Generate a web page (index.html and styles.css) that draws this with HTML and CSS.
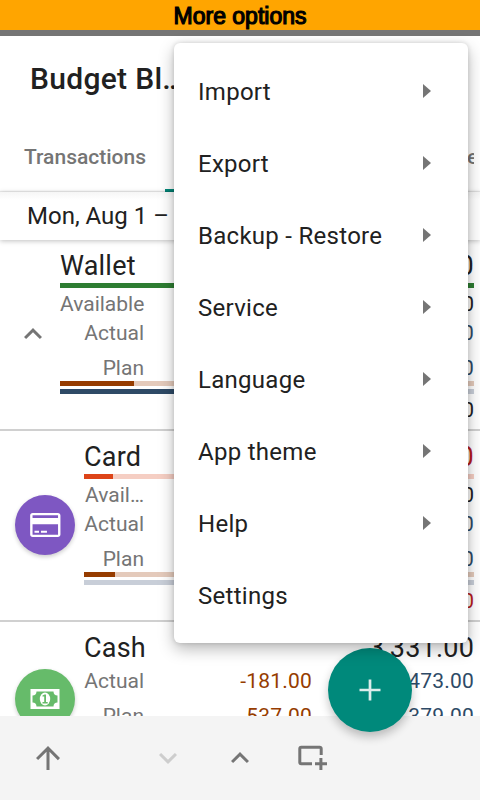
FILE: index.html
```html
<!DOCTYPE html>
<html lang="en">
<head>
<meta charset="utf-8">
<title>Budget</title>
<link rel="stylesheet" href="styles.css">
</head>
<body>
<div class="screen">
  <div class="banner">More options</div>
  <div class="statusbar"></div>
  <header class="appbar"><h1>Budget Bl…</h1></header>
  <nav class="tabs">
    <span class="tab">Transactions</span>
    <span class="tab tab-active"></span>
    <span class="tab tab-last">e</span>
  </nav>
  <div class="period">Mon, Aug 1 –</div>
  <main class="accounts">
    <section class="account">
      <div class="lead"><svg class="chevron" width="36" height="36" viewBox="0 0 24 24"><path d="M12 8l-6 6 1.41 1.41L12 10.83l4.59 4.58L18 14z"/></svg></div>
      <div class="body wide">
        <div class="title"><span>Wallet</span><span>0.00</span></div>
        <div class="bar green"></div>
        <div class="row available"><span class="label">Available</span><span>0.00</span></div>
        <div class="row"><span class="label">Actual</span><span class="income">0.00</span></div>
        <div class="row plan"><span class="label">Plan</span><span class="income">0.00</span></div>
        <div class="bar brown-light"><div class="fill brown fill-wallet"></div></div>
        <div class="bar second blue-light"><div class="fill blue fill-long"></div></div>
        <div class="row total"><span></span><span>0.00</span></div>
      </div>
    </section>
    <section class="account">
      <div class="lead"><div class="avatar purple"><svg width="36" height="36" viewBox="0 0 24 24"><path fill-rule="evenodd" d="M3.8 4h16.8c1 0 1.7.7 1.7 1.6v12.8c0 .9-.7 1.6-1.7 1.6H3.8c-1 0-1.7-.7-1.7-1.6V5.600C2.100 4.700 2.800 4 3.800 4zm-.1 1.500v1.800h17V5.500zm0 6v7h17v-7zm1.300 4.300h3v1.400H5zm4.300 0h4v1.400h-4z"/></svg></div></div>
      <div class="body">
        <div class="title"><span>Card</span><span class="negative">0.00</span></div>
        <div class="bar red-light"><div class="fill red"></div></div>
        <div class="row available"><span class="label">Avail…</span><span>0.00</span></div>
        <div class="row"><span class="label">Actual</span><span class="income">0.00</span></div>
        <div class="row plan"><span class="label">Plan</span><span class="income">0.00</span></div>
        <div class="bar brown-light"><div class="fill brown fill-card"></div></div>
        <div class="bar second blue-light"></div>
        <div class="row total"><span></span><span class="negative">0.00</span></div>
      </div>
    </section>
    <section class="account cash">
      <div class="lead"><div class="avatar leaf"><svg width="30" height="20" viewBox="0 0 30 20"><path fill-rule="evenodd" d="M.5 0h29v20H.5zM6.500 2.500c0 2.500-1.500 4-4 4v7c2.500 0 4 1.500 4 4h17c0-2.500 1.500-4 4-4v-7c-2.500 0-4-1.500-4-4z"/><ellipse cx="15" cy="10" rx="5.200" ry="6.500"/><path class="one" d="M12.500 6.600l2-1.200h1.500v7.600h1.700v1.600h-5.200V13h1.700V7.600h-1.700z"/></svg></div></div>
      <div class="body">
        <div class="title"><span>Cash</span><span>3,331.00</span></div>
        <div class="row triple"><span class="label">Actual</span><span class="expense">-181.00</span><span class="income">473.00</span></div>
        <div class="row plan triple"><span class="label">Plan</span><span class="expense">-537.00</span><span class="income">379.00</span></div>
      </div>
    </section>
  </main>
  <footer class="toolbar">
    <svg class="tool" viewBox="0 0 24 24"><path d="M4 12l1.410 1.410L11 7.830V20h2V7.830l5.580 5.590L20 12l-8-8z"/></svg>
    <svg class="tool down" viewBox="0 0 24 24"><path d="M16.590 8.590L12 13.170 7.410 8.590 6 10l6 6 6-6z"/></svg>
    <svg class="tool up" viewBox="0 0 24 24"><path d="M12 8l-6 6 1.410 1.410L12 10.830l4.590 4.580L18 14z"/></svg>
    <svg class="tool add" viewBox="0 0 36 36"><path class="line" d="M18 23.800H7.300a1.500 1.500 0 0 1-1.500-1.500V8.700A1.500 1.500 0 0 1 7.300 7.200h18.400a1.500 1.500 0 0 1 1.500 1.500V15M26.900 18v12M21 23.800h12"/></svg>
  </footer>
  <button class="fab" aria-label="Add"><svg width="36" height="36" viewBox="0 0 24 24"><path d="M19 12.900h-6.100V19h-1.800v-6.100H5v-1.800h6.100V5h1.800v6.100H19z"/></svg></button>
  <div class="menu">
    <div class="item">Import<i class="arrow"></i></div>
    <div class="item">Export<i class="arrow"></i></div>
    <div class="item">Backup - Restore<i class="arrow"></i></div>
    <div class="item">Service<i class="arrow"></i></div>
    <div class="item">Language<i class="arrow"></i></div>
    <div class="item">App theme<i class="arrow"></i></div>
    <div class="item">Help<i class="arrow"></i></div>
    <div class="item">Settings</div>
  </div>
</div>
</body>
</html>
```
FILE: styles.css
```css
* { box-sizing: border-box; }
body { margin: 0; font-family: Roboto, sans-serif; color: #212121; }
.screen { position: relative; width: 480px; height: 800px; overflow: hidden; background: #fff; display: flex; flex-direction: column; }
.banner { height: 30px; flex: none; background: #ffa500; color: #000; font: 23px/32px "Liberation Sans", sans-serif; -webkit-text-stroke: 1.2px #000; text-align: center; }
.statusbar { height: 6px; flex: none; background: #757575; }
.appbar { height: 85px; flex: none; padding-left: 30px; }
h1 { margin: 0; font-size: 30px; font-weight: 500; line-height: 86px; letter-spacing: 0.3px; white-space: nowrap; }
.tabs { height: 71px; flex: none; display: flex; font-size: 21px; font-weight: 500; line-height: 72px; color: #757575; }
.tab { width: 165px; padding-left: 24px; }
.tab-active { width: 302px; border-bottom: 3px solid #00897b; }
.tab-last { width: 7px; padding-left: 0; overflow: hidden; }
.period { height: 48px; flex: none; padding-left: 27px; font-size: 24px; line-height: 48px; box-shadow: 0 1px 5px rgba(0,0,0,.25), 0 -1px 1px rgba(0,0,0,.08); z-index: 1; background: linear-gradient(#f6f6f6, #fff 8px); }
.accounts { height: 476px; flex: none; overflow: hidden; }
.account { height: 191px; display: flex; border-bottom: 2px solid #d0d0d0; }
.lead { width: 84px; flex: none; padding: 0 0 2px 15px; display: flex; align-items: center; }
.account:first-child .lead { width: 60px; }
.chevron { fill: #757575; }
.body { flex: 1; padding-right: 6px; }
.title { height: 43px; padding-top: 9px; display: flex; justify-content: space-between; font-size: 27px; line-height: 34px; letter-spacing: 0.2px; }
.row { display: flex; justify-content: space-between; height: 28px; font-size: 21px; line-height: 28px; }
.label { width: 60px; text-align: right; color: #757575; }
.wide .label { width: 84px; }
.available { height: 31px; line-height: 33px; }
.plan { height: 34px; padding-top: 7px; line-height: 28px; }
.total { height: 35px; line-height: 32px; }
.bar { height: 5px; }
.second { margin-top: 3px; }
.fill { height: 5px; }
.green { background: #2e7d32; }
.brown { background: #963c00; }
.brown-light { background: #e4cabb; }
.blue { background: #2e4a66; }
.blue-light { background: #c8ced8; }
.red { width: 29px; background: #dd4418; }
.red-light { background: #f5cec3; }
.fill-wallet { width: 74px; }
.fill-card { width: 31px; }
.fill-long { width: 200px; }
.income, .expense { letter-spacing: 0.2px; }
.income { color: #2e4a66; }
.expense { color: #963c00; }
.negative { color: #b71c1c; }
.avatar { width: 60px; height: 60px; border-radius: 50%; display: flex; align-items: center; justify-content: center; box-shadow: 0 2px 4px rgba(0,0,0,.2); fill: #fff; }
.purple { background: #7e57c2; }
.leaf { background: #66bb6a; }
.one { fill: #66bb6a; }
.cash .lead { padding-top: 47px; align-items: flex-start; }
.cash .title { height: 45px; }
.triple { display: grid; grid-template-columns: 60px 168px 162px; text-align: right; }
.toolbar { height: 84px; flex: none; background: #f4f4f4; display: flex; align-items: center; padding-left: 30px; }
.tool { width: 36px; height: 36px; fill: #757575; }
.down { margin-left: 84px; opacity: .3; }
.up { margin-left: 36px; }
.add { margin-left: 36px; }
.line { fill: none; stroke: #757575; stroke-width: 3; }
.fab { position: absolute; left: 328px; top: 648px; width: 84px; height: 84px; padding: 0; border: 0; border-radius: 50%; background: #00897b; display: flex; align-items: center; justify-content: center; box-shadow: 0 5px 10px rgba(0,0,0,.24); fill: #dceeec; z-index: 2; }
.menu { position: absolute; left: 174px; top: 43px; width: 294px; height: 600px; padding: 12px 0; border-radius: 6px; background: #fff; box-shadow: 0 6px 16px rgba(0,0,0,.28), 0 0 5px rgba(0,0,0,.14); z-index: 3; }
.item { height: 72px; padding: 2px 37px 0 24px; display: flex; align-items: center; justify-content: space-between; font-size: 24px; line-height: 30px; letter-spacing: 0.28px; }
.arrow { margin-top: -2px; border-left: 8px solid #757575; border-top: 7.500px solid transparent; border-bottom: 7.500px solid transparent; }
```
